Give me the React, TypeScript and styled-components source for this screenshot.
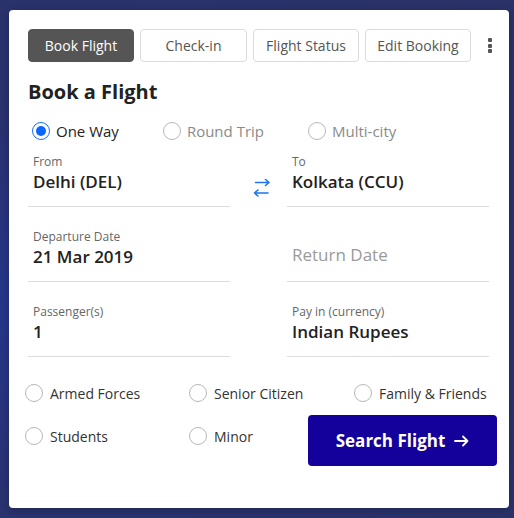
import React, { useState } from 'react'
import styled, { createGlobalStyle } from 'styled-components'

const GlobalStyle = createGlobalStyle`
  html, body {
    margin: 0;
    padding: 0;
  }
  body {
    font-family: 'Open Sans', 'Noto Sans', sans-serif;
    background: #2a3270;
  }
`

const Page = styled.div`
  min-height: 518px;
  box-sizing: border-box;
  padding: 10px 5px 10px 9px;
  background: radial-gradient(ellipse at 0% 60%, #26368a 0%, #2a3270 45%, #2b3268 100%);
`

const Card = styled.div`
  width: 500px;
  height: 498px;
  box-sizing: border-box;
  background: #fff;
  border-radius: 4px;
  padding: 19px 12px 0 19px;
  box-shadow: 0 2px 8px rgba(0, 0, 0, 0.25);
`

const Tabs = styled.div`
  display: flex;
  align-items: center;
  gap: 6px;
`

const Tab = styled.button<{ $active?: boolean; $w: number }>`
  width: ${({ $w }) => $w}px;
  height: 33px;
  box-sizing: border-box;
  border-radius: 4px;
  border: 1px solid ${({ $active }) => ($active ? '#555' : '#dcdcdc')};
  background: ${({ $active }) => ($active ? '#555' : '#fff')};
  color: ${({ $active }) => ($active ? '#fff' : '#555')};
  font-family: inherit;
  font-size: 14px;
  padding: 0;
  cursor: pointer;
`

const Kebab = styled.div`
  margin-left: auto;
  width: 14px;
  display: flex;
  flex-direction: column;
  align-items: center;
  gap: 1.5px;
  span {
    width: 4px;
    height: 4px;
    border-radius: 1px;
    background: #555;
  }
`

const Heading = styled.h2`
  margin: 16px 0 0;
  font-size: 20px;
  line-height: 28px;
  font-weight: 700;
  color: #222;
`

const TripRow = styled.div`
  display: flex;
  gap: 44px;
  margin: 15px 0 0 4px;
  height: 20px;
  align-items: center;
`

const Radio = styled.span<{ $checked?: boolean }>`
  width: 18px;
  height: 18px;
  box-sizing: border-box;
  border-radius: 50%;
  border: 1px solid ${({ $checked }) => ($checked ? '#1a6ff0' : '#b8b8b8')};
  border-width: ${({ $checked }) => ($checked ? '1.5px' : '1px')};
  display: inline-flex;
  align-items: center;
  justify-content: center;
  flex: none;
  &::after {
    content: '';
    width: 10px;
    height: 10px;
    border-radius: 50%;
    background: ${({ $checked }) => ($checked ? '#0a66ff' : 'transparent')};
  }
`

const TripOption = styled.label<{ $active?: boolean }>`
  display: flex;
  align-items: center;
  gap: 6px;
  font-size: 15px;
  color: ${({ $active }) => ($active ? '#222' : '#8a8a8a')};
  cursor: pointer;
`

const Fields = styled.div`
  display: grid;
  grid-template-columns: 202px 57px 202px;
  row-gap: 22px;
  margin-top: 13px;
`

const Field = styled.div`
  height: 53px;
  box-sizing: border-box;
  padding: 0 5px;
  border-bottom: 1px solid #dcdcdc;
  display: flex;
  flex-direction: column;
`

const Label = styled.div`
  font-size: 12px;
  line-height: 16px;
  color: #666;
`

const Value = styled.div<{ $placeholder?: boolean }>`
  font-size: 17px;
  line-height: 24px;
  font-weight: ${({ $placeholder }) => ($placeholder ? 400 : 600)};
  color: ${({ $placeholder }) => ($placeholder ? '#9a9a9a' : '#222')};
  margin-top: ${({ $placeholder }) => ($placeholder ? '14px' : '0')};
`

const SwapCell = styled.div`
  display: flex;
  align-items: center;
  justify-content: center;
  padding: 14px 0 0 6px;
  color: #1f74f0;
`

const BottomRow = styled.div<{ $top: number }>`
  display: flex;
  align-items: flex-start;
  margin: ${({ $top }) => $top}px 0 0 -3px;
`

const Option = styled.label<{ $w?: number; $offset?: number }>`
  display: flex;
  align-items: center;
  gap: 7px;
  height: 20px;
  font-size: 14px;
  color: #333;
  cursor: pointer;
  ${({ $w }) => ($w ? `width: ${$w}px;` : 'flex: 1;')}
  margin-top: ${({ $offset }) => $offset ?? 0}px;
`

const SearchButton = styled.button`
  width: 189px;
  height: 51px;
  border: none;
  border-radius: 4px;
  background: #14009a;
  color: #fff;
  font-family: inherit;
  font-size: 17px;
  font-weight: 700;
  display: flex;
  align-items: center;
  justify-content: center;
  gap: 9px;
  cursor: pointer;
`

const tabs = [
  { label: 'Book Flight', w: 106 },
  { label: 'Check-in', w: 107 },
  { label: 'Flight Status', w: 106 },
  { label: 'Edit Booking', w: 106 },
]

const SwapIcon = () => (
  <svg width="18" height="18" viewBox="0 0 18 18" fill="none" stroke="currentColor" strokeWidth="1.6" strokeLinecap="round" strokeLinejoin="round">
    <path d="M2.5 3.5H16M12.5 0.5L16 3.5L12.5 6.5" />
    <path d="M15 14H1.5M5 11L1.5 14L5 17" />
  </svg>
)

const ArrowIcon = () => (
  <svg width="15" height="12" viewBox="0 0 15 12" fill="none" stroke="currentColor" strokeWidth="1.8" strokeLinecap="round" strokeLinejoin="round">
    <path d="M1 6H13.5M9 1.5L13.5 6L9 10.5" />
  </svg>
)

const App = () => {
  const [active, setActive] = useState(0)
  const [trip, setTrip] = useState('One Way')

  return (
    <Page>
      <GlobalStyle />
      <Card>
        <Tabs>
          {tabs.map((t, i) => (
            <Tab key={t.label} $w={t.w} $active={i === active} onClick={() => setActive(i)}>
              {t.label}
            </Tab>
          ))}
          <Kebab>
            <span />
            <span />
            <span />
          </Kebab>
        </Tabs>

        <Heading>Book a Flight</Heading>

        <TripRow>
          {['One Way', 'Round Trip', 'Multi-city'].map((t) => (
            <TripOption key={t} $active={trip === t} onClick={() => setTrip(t)}>
              <Radio $checked={trip === t} />
              {t}
            </TripOption>
          ))}
        </TripRow>

        <Fields>
          <Field>
            <Label>From</Label>
            <Value>Delhi (DEL)</Value>
          </Field>
          <SwapCell>
            <SwapIcon />
          </SwapCell>
          <Field>
            <Label>To</Label>
            <Value>Kolkata (CCU)</Value>
          </Field>

          <Field>
            <Label>Departure Date</Label>
            <Value>21 Mar 2019</Value>
          </Field>
          <div />
          <Field>
            <Value $placeholder>Return Date</Value>
          </Field>

          <Field>
            <Label>Passenger(s)</Label>
            <Value>1</Value>
          </Field>
          <div />
          <Field>
            <Label>Pay in (currency)</Label>
            <Value>Indian Rupees</Value>
          </Field>
        </Fields>

        <BottomRow $top={26}>
          <Option $w={164}>
            <Radio />
            Armed Forces
          </Option>
          <Option $w={165}>
            <Radio />
            Senior Citizen
          </Option>
          <Option>
            <Radio />
            Family &amp; Friends
          </Option>
        </BottomRow>
        <BottomRow $top={12}>
          <Option $w={164} $offset={11}>
            <Radio />
            Students
          </Option>
          <Option $offset={11}>
            <Radio />
            Minor
          </Option>
          <SearchButton>
            Search Flight
            <ArrowIcon />
          </SearchButton>
        </BottomRow>
      </Card>
    </Page>
  )
}

export default App
